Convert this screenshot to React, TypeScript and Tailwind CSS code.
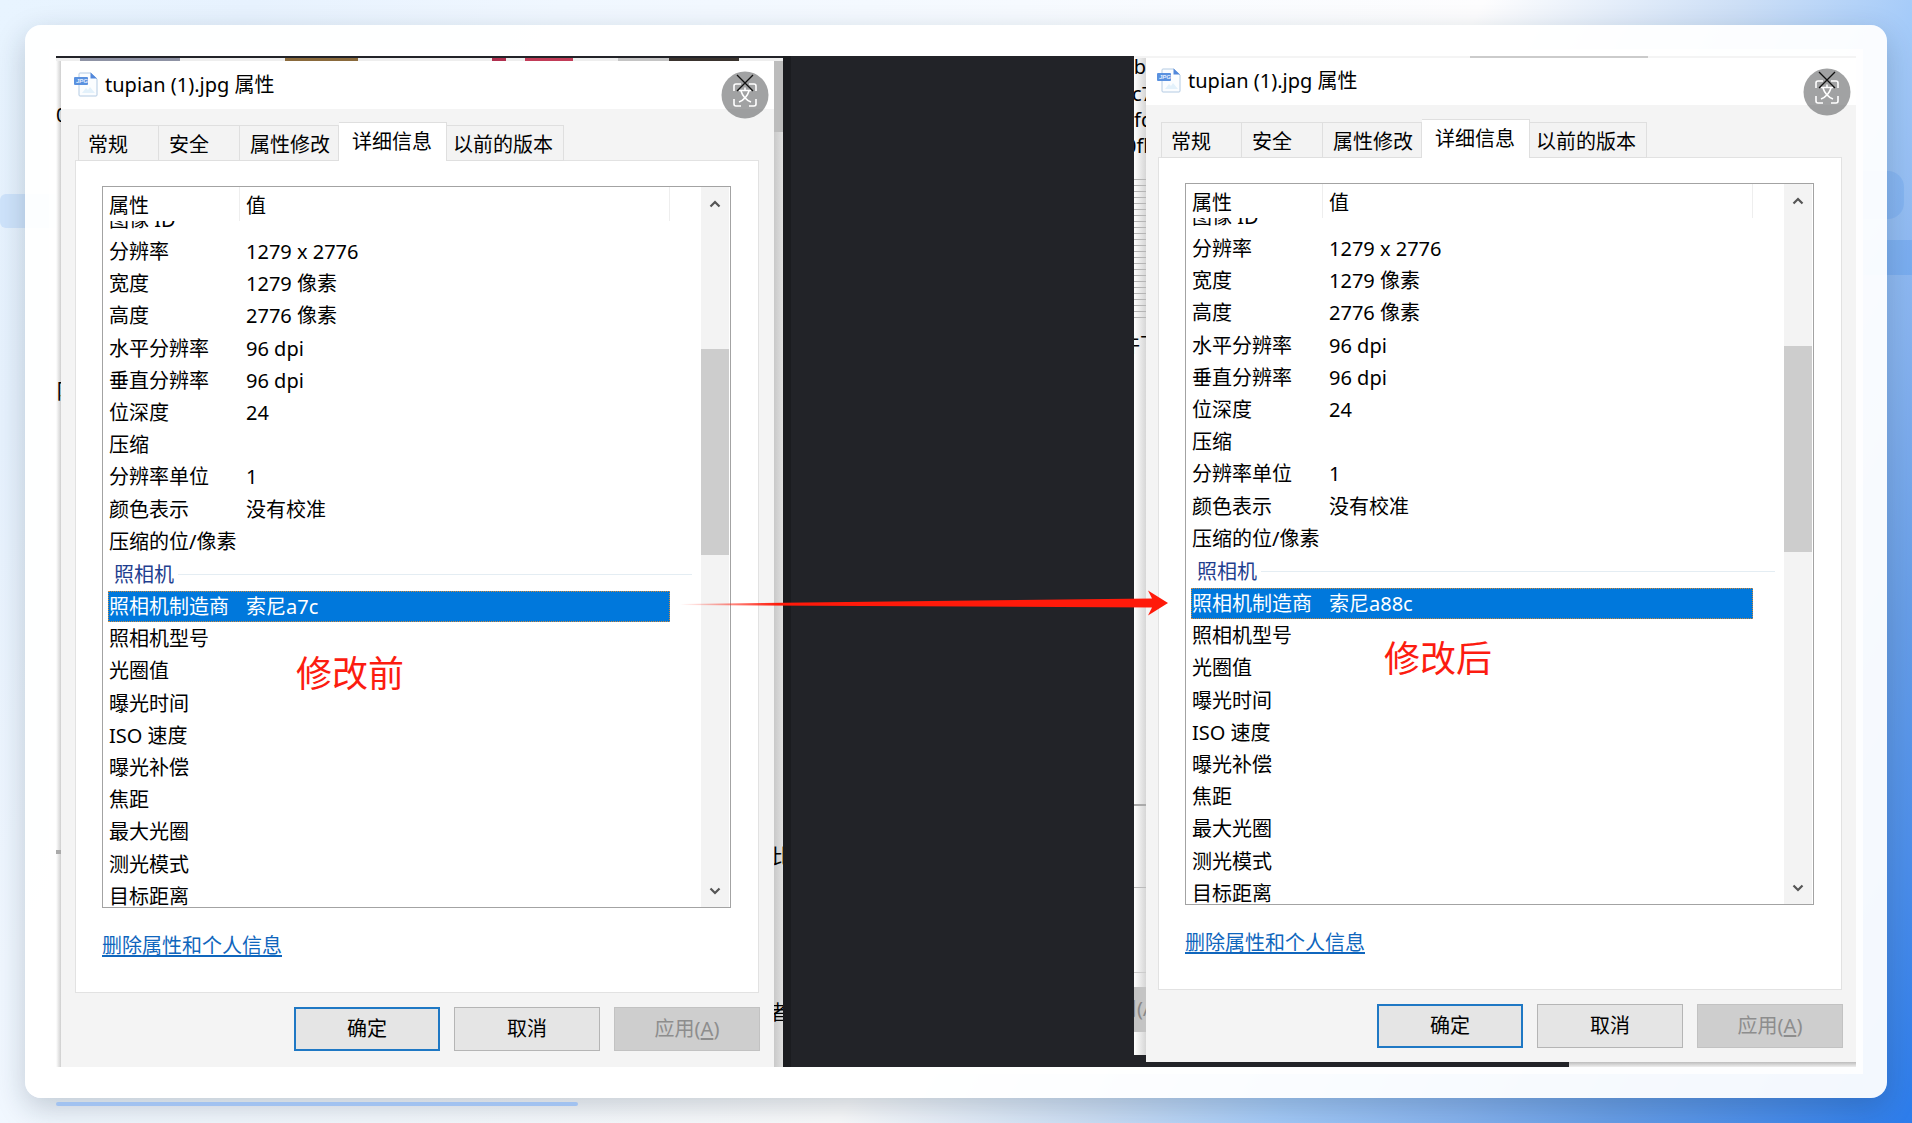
import clsx from 'clsx';

interface Property {
    name: string;
    value?: string;
}

interface DialogProps {
    id: string;
    maker: string;
    note: string;
    noteClassName: string;
    titleClassName: string;
    bodyClassName: string;
}

const imageRows: Property[] = [
    { name: '分辨率', value: '1279 x 2776' },
    { name: '宽度', value: '1279 像素' },
    { name: '高度', value: '2776 像素' },
    { name: '水平分辨率', value: '96 dpi' },
    { name: '垂直分辨率', value: '96 dpi' },
    { name: '位深度', value: '24' },
    { name: '压缩' },
    { name: '分辨率单位', value: '1' },
    { name: '颜色表示', value: '没有校准' },
    { name: '压缩的位/像素' },
];

const cameraRows: Property[] = [
    { name: '照相机型号' },
    { name: '光圈值' },
    { name: '曝光时间' },
    { name: 'ISO 速度' },
    { name: '曝光补偿' },
    { name: '焦距' },
    { name: '最大光圈' },
    { name: '测光模式' },
    { name: '目标距离' },
];

const tabs = [
    { label: '常规', className: 'w-[81px] pl-[9px]' },
    { label: '安全', className: 'w-[81px] pl-[10px]' },
    { label: '属性修改', className: 'w-[99px] pl-[10px]' },
    { label: '详细信息', className: 'w-[108px] pl-[13px]', active: true },
    { label: '以前的版本', className: 'w-[117px] pl-[6px]' },
];

function JpgIcon() {
    return (
        <svg width="24" height="25" viewBox="0 0 24 25" className="shrink-0">
            <path d="M6 1h11l6 6v16q0 1-1 1H6q-1 0-1-1V2q0-1 1-1z" fill="#fbfdff" stroke="#b4cbe3" />
            <path d="M16.500 .5v6h6.500z" fill="#5288dc" />
            <path d="M8 21l4-5 2 2 2-3 5 6z" fill="#e3f1fb" />
            <rect x="0" y="5" width="14" height="8" rx="1" fill="#5a91df" />
            <text x="2" y="11" fontSize="6" fontWeight="700" fill="#e6f0ff" className="font-['Liberation_Sans',sans-serif] italic">JPG</text>
        </svg>
    );
}

function TranslateBadge() {
    return (
        <svg width="48" height="48" viewBox="0 0 48 48">
            <circle cx="24" cy="24" r="23.500" fill="#6f7072" fillOpacity="0.65" />
            <g fill="none" stroke="#fff" strokeWidth="1.600">
                <path d="M13 20v-5q0-2 2-2h5M28 13h5q2 0 2 2v5M35 28v5q0 2-2 2h-5M20 35h-5q-2 0-2-2v-5" />
                <path d="M18 19.500h12M24 16.500v3M20 20q2.500 8 10 11M28 20q-2.500 8-10 11" />
            </g>
            <path d="M16 4l16 16M32 4L16 20" stroke="#111" strokeWidth="1.300" />
        </svg>
    );
}

function Chevron({ down }: { down?: boolean }) {
    return (
        <svg width="12" height="8" viewBox="0 0 12 8" fill="none" stroke="#555" strokeWidth="2.200">
            <path d={down ? 'M1.500 1.500L6 6l4.500-4.500' : 'M1.500 6.500L6 2l4.500 4.500'} />
        </svg>
    );
}

function Row({ name, value, selected }: Property & { selected?: boolean }) {
    return (
        <tr
            className={clsx(
                'grid w-[562px] grid-cols-[137px_1fr] items-center',
                selected && 'h-[31px] bg-[#0078dc] text-white outline-1 -outline-offset-1 outline-dotted outline-[#d08a3c]'
            )}
        >
            <th scope="row" className="pl-px text-left font-normal whitespace-nowrap">{name}</th>
            <td className="pl-px">{value}</td>
        </tr>
    );
}

function PropertyList({ maker }: { maker: string }) {
    return (
        <div className="flex h-[722px] border border-[#a3a3a3] bg-white pr-px">
            <div className="min-w-0 flex-1 overflow-hidden pl-[5px] leading-[30px]">
                <table className="block">
                    <thead className="block">
                        <tr className="grid h-[34px] grid-cols-[132px_430px] items-center">
                            <th scope="col" className="h-full border-r border-[#eee] pt-1 pl-px text-left font-normal">属性</th>
                            <th scope="col" className="h-full border-r border-[#eee] pt-1 pl-[6px] text-left font-normal">值</th>
                        </tr>
                    </thead>
                    <tbody className="block">
                        {/* first row is half scrolled under the header */}
                        <tr className="flex h-[15px] items-end overflow-hidden">
                            <th scope="row" className="pl-px text-left font-normal leading-8">图像 ID</th>
                        </tr>
                    </tbody>
                    <tbody className="grid h-[322px] auto-rows-fr">
                        {imageRows.map((row) => <Row key={row.name} {...row} />)}
                    </tbody>
                    <tbody className="block">
                        <tr className="block">
                            <th scope="rowgroup" className="flex h-[33px] items-center gap-1 pr-[9px] pl-[6px] font-normal text-[#1f3f8f]">
                                照相机
                                <span className="h-px flex-1 bg-[#e4edf3]" />
                            </th>
                        </tr>
                    </tbody>
                    <tbody className="grid h-[322px] auto-rows-fr">
                        <Row name="照相机制造商" value={maker} selected />
                        {cameraRows.map((row) => <Row key={row.name} {...row} />)}
                    </tbody>
                </table>
            </div>
            <div className="flex w-7 flex-col items-center bg-[#f3f3f3]">
                <button type="button" aria-label="向上滚动" className="flex h-[34px] w-full items-center justify-center"><Chevron /></button>
                <div className="mt-[128px] h-[206px] w-full bg-[#cdcdcd]" />
                <button type="button" aria-label="向下滚动" className="mt-auto flex h-8 w-full items-center justify-center"><Chevron down /></button>
            </div>
        </div>
    );
}

function PropertiesDialog({ id, maker, note, noteClassName, titleClassName, bodyClassName }: DialogProps) {
    return (
        <section aria-labelledby={id} className="relative min-w-0 flex-1 bg-[#f4f4f4] text-[20px] text-black">
            <header className={clsx('flex items-center gap-[7px] bg-white', titleClassName)}>
                <JpgIcon />
                <h2 id={id} className="leading-7">tupian (1).jpg 属性</h2>
            </header>
            <button type="button" aria-label="关闭" className="absolute top-[10px] right-[5px]"><TranslateBadge /></button>
            <div className={bodyClassName}>
                <div role="tablist" className="relative z-10 -mb-px flex items-end pl-[3px]">
                    {tabs.map((tab) => (
                        <button
                            key={tab.label}
                            type="button"
                            role="tab"
                            aria-selected={!!tab.active}
                            className={clsx(
                                'border-t border-r border-[#dfdfdf] text-left whitespace-nowrap first:border-l',
                                tab.active ? 'h-[39px] bg-white' : 'h-[36px] border-b bg-[#f3f3f3] pt-[3px]',
                                tab.className
                            )}
                        >
                            {tab.label}
                        </button>
                    ))}
                </div>
                <div className="h-[833px] border border-[#e2e2e2] bg-white pt-[25px] pr-[27px] pl-[26px]">
                    <PropertyList maker={maker} />
                    <a href="#remove" className="mt-[22px] inline-block leading-8 text-[#0f66bd] underline underline-offset-2">删除属性和个人信息</a>
                </div>
                <div className="mt-[14px] -mr-px flex justify-end gap-[14px]">
                    <button type="button" className="h-[44px] w-[146px] border-2 border-[#1f78c4] bg-[#e5e5e5]">确定</button>
                    <button type="button" className="h-[44px] w-[146px] border border-[#b5b5b5] bg-[#e5e5e5]">取消</button>
                    <button type="button" disabled className="h-[44px] w-[146px] border border-[#c2c2c2] bg-[#cecece] text-[#8d8d8d]">
                        应用(<span className="underline underline-offset-2">A</span>)
                    </button>
                </div>
            </div>
            <p className={clsx('absolute text-[36px] leading-[44px] text-[#fc1c10]', noteClassName)}>{note}</p>
        </section>
    );
}

function Arrow() {
    return (
        <svg viewBox="0 0 488 26" preserveAspectRatio="none" className="absolute top-[534px] right-[688px] left-[624px] h-[26px]" width="488">
            <defs>
                <linearGradient id="fade" x1="0" x2="1" y1="0" y2="0">
                    <stop offset="0" stopColor="#ff1a0a" stopOpacity="0" />
                    <stop offset="0.200" stopColor="#ff1a0a" />
                </linearGradient>
            </defs>
            <path d="M0 14L472 8.500 468 .500 488 13 468 25.500 472 17.500 0 15z" fill="url(#fade)" />
        </svg>
    );
}

export default function App() {
    return (
        <div className="relative min-h-screen overflow-hidden bg-[linear-gradient(120deg,#e8f4ff_0%,#e7f2fe_10%,#f0f7ff_22%,#f6faff_40%,#fdfdfe_58%,#cddff6_68%,#a5cbf9_75%,#88b4f0_82%,#699fe8_88%,#4c8eea_94%,#2c7ceb_100%)] p-[25px] font-['Noto_Sans','Noto_Sans_CJK_SC',sans-serif]">
            <div className="absolute top-[194px] left-0 h-[34px] w-16 rounded-md bg-[#cfe4fc]" />
            <div className="absolute top-[171px] right-2 h-12 w-20 rounded-2xl bg-[#2f80ed]/15" />
            <div className="absolute top-[240px] right-0 h-[35px] w-20 bg-[#2f80ed]/20" />
            <main className="relative rounded-2xl bg-white/94 p-[24px] shadow-[0_10px_30px_rgba(20,40,60,0.22)]">
                <div className="bg-white/80 p-[7px]">
                    <div className="relative flex h-[1011px] overflow-hidden bg-[#222328]">
                        <div className="flex w-[727px] flex-col">
                            {/* slice of the thumbnails behind the window */}
                            <div className="mt-[2px] flex h-[3px] shrink-0 bg-[#eee]">
                                <span className="ml-6 w-[100px] bg-[#8f93a5]" />
                                <span className="ml-[105px] w-[73px] bg-[#8a6a3c]" />
                                <span className="ml-[134px] w-[14px] bg-[#b0304f]" />
                                <span className="ml-[19px] w-12 bg-[#c23c58]" />
                                <span className="ml-[45px] w-[51px] bg-[#c4c4c4]" />
                                <span className="w-[70px] bg-[#3a332e]" />
                            </div>
                            <div className="flex flex-1">
                                <div className="relative w-[5px] overflow-hidden bg-linear-to-r from-white to-[#cfcfcf] text-[20px] leading-7">
                                    <span className="absolute top-[40px] left-0">0</span>
                                    <span className="absolute top-[317px] left-0">阝</span>
                                    <span className="absolute top-[789px] left-0 h-1 w-full bg-[#aaa]" />
                                </div>
                                <PropertiesDialog
                                    id="before-title"
                                    maker="索尼a7c"
                                    note="修改前"
                                    noteClassName="top-[591px] left-[235px]"
                                    titleClassName="h-12 pl-[13px] pb-px"
                                    bodyClassName="pt-[13px] pr-[15px] pl-[14px]"
                                />
                                <div className="relative w-[9px] overflow-hidden bg-linear-to-r from-[#c9c9c9] to-[#e0e0e0] text-[20px] leading-7">
                                    <span className="block h-[71px] bg-[#bcbcbc]" />
                                    <span className="absolute top-[782px] -left-[2px]">比</span>
                                    <span className="absolute top-[938px] -left-[5px]">者</span>
                                </div>
                            </div>
                        </div>
                        <div className="min-w-0 flex-1 border-l-8 border-[#1b1c20]" />
                        <div className="flex w-[722px] flex-col">
                            <div className="flex h-[2px] shrink-0 bg-[#f4f4f4]">
                                <span className="ml-[336px] w-[178px] bg-[#cbcbcb]" />
                            </div>
                            <div className="flex h-[1004px]">
                                <div className="relative mb-[7px] w-3 overflow-hidden bg-linear-to-r from-white to-[#d6d6d6] text-[20px] leading-[26px]">
                                    <span className="absolute -top-[4px] right-0">4b</span>
                                    <span className="absolute top-[23px] -left-[2px]">c7</span>
                                    <span className="absolute top-[49px] left-0">fd</span>
                                    <span className="absolute top-[75px] -left-[9px]">0fb</span>
                                    <span className="absolute top-[121px] h-[142px] w-full bg-[repeating-linear-gradient(#b5b5b5_0_1px,transparent_1px_6px)]" />
                                    <span className="absolute top-[274px] -left-[14px] whitespace-nowrap">件下</span>
                                    <span className="absolute top-[746px] h-[2px] w-full bg-[#aaa]" />
                                    <span className="absolute top-[829px] h-px w-full bg-[#bbb]" />
                                    <span className="absolute top-[914px] h-px w-full bg-[#ccc]" />
                                    <span className="absolute top-[929px] h-[45px] w-full bg-[#c4c4c4]" />
                                    <span className="absolute top-[938px] -left-[17px] whitespace-nowrap text-[#888]">用(A</span>
                                </div>
                                <PropertiesDialog
                                    id="after-title"
                                    maker="索尼a88c"
                                    note="修改后"
                                    noteClassName="top-[579px] left-[238px]"
                                    titleClassName="h-[47px] pl-[11px] pb-[2px]"
                                    bodyClassName="pt-[14px] pr-[14px] pl-3"
                                />
                            </div>
                            <div className="flex flex-1 justify-end">
                                <span className="w-[287px] bg-linear-to-b from-[#bdbdbd] to-[#eee]" />
                            </div>
                        </div>
                        <Arrow />
                    </div>
                </div>
            </main>
            <div className="absolute bottom-[17px] left-14 h-1 w-[522px] rounded-full bg-[#a1c2f0]" />
        </div>
    );
}
